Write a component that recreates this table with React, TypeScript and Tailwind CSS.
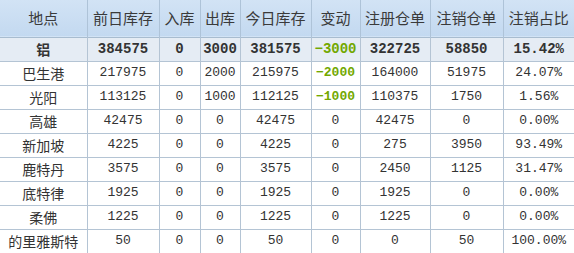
const cols = [87, 72, 41, 40, 71, 49, 70, 73, 71];
const headers = ['地点', '前日库存', '入库', '出库', '今日库存', '变动', '注册仓单', '注销仓单', '注销占比'];

type Row = string[];

const total: Row = ['铝', '384575', '0', '3000', '381575', '-3000', '322725', '58850', '15.42%'];

const rows: Row[] = [
  ['巴生港', '217975', '0', '2000', '215975', '-2000', '164000', '51975', '24.07%'],
  ['光阳', '113125', '0', '1000', '112125', '-1000', '110375', '1750', '1.56%'],
  ['高雄', '42475', '0', '0', '42475', '0', '42475', '0', '0.00%'],
  ['新加坡', '4225', '0', '0', '4225', '0', '275', '3950', '93.49%'],
  ['鹿特丹', '3575', '0', '0', '3575', '0', '2450', '1125', '31.47%'],
  ['底特律', '1925', '0', '0', '1925', '0', '1925', '0', '0.00%'],
  ['柔佛', '1225', '0', '0', '1225', '0', '1225', '0', '0.00%'],
  ['的里雅斯特', '50', '0', '0', '50', '0', '0', '50', '100.00%'],
];

const cjk = "font-['Noto_Sans_CJK_SC',sans-serif]";
const mono = "font-['Liberation_Mono','Noto_Sans_CJK_SC',monospace]";

function Cell({ v, i, bold }: { v: string; i: number; bold?: boolean }) {
  const neg = v.startsWith('-');
  if (i === 0) {
    return (
      <td className={`border-r border-[#b4c4d4] text-center text-[14px] ${cjk} ${bold ? 'font-bold' : ''}`}>
        {v}
      </td>
    );
  }
  return (
    <td
      className={`border-r border-[#b4c4d4] text-center last:border-r-0 ${mono} ${
        bold ? 'text-[14px] font-bold' : 'text-[13px]'
      } ${neg ? 'font-bold text-[#72a800]' : ''}`}
    >
      {neg ? '−' + v.slice(1) : v}
    </td>
  );
}

export default function App() {
  return (
    <div className="h-[253px] w-[574px] overflow-hidden bg-white text-[#333]">
      <table className="w-[574px] table-fixed border-collapse">
        <colgroup>
          {cols.map((w, i) => (
            <col key={i} style={{ width: w }} />
          ))}
        </colgroup>
        <thead>
          <tr className="h-[37px] border-b border-[#a8bccf] bg-gradient-to-b from-[#d2e3f5] to-[#c3d9f0]">
            {headers.map((h) => (
              <th
                key={h}
                className={`border-r border-[#aec3d8] text-center text-[15px] font-normal text-[#3a3a3a] last:border-r-0 ${cjk}`}
              >
                {h}
              </th>
            ))}
          </tr>
        </thead>
        <tbody>
          <tr className="h-[24px] border-b border-[#b4c4d4] bg-[#e5ecf4]">
            {total.map((v, i) => (
              <Cell key={i} v={v} i={i} bold />
            ))}
          </tr>
          {rows.map((r) => (
            <tr key={r[0]} className="h-[24px] border-b border-[#b4c4d4]">
              {r.map((v, i) => (
                <Cell key={i} v={v} i={i} />
              ))}
            </tr>
          ))}
        </tbody>
      </table>
    </div>
  );
}
